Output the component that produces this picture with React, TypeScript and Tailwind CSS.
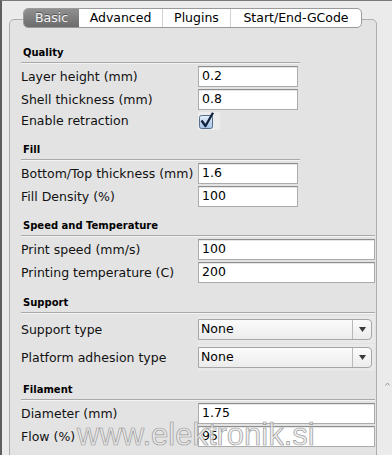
import type { ReactNode } from 'react';

const sans = "font-['DejaVu_Sans',sans-serif]";

function Header({ title, wide = false }: { title: string; wide?: boolean }) {
  return (
    <div
      className={`${wide ? 'w-[354px]' : 'w-[279px]'} h-[16px] pl-[2px] pb-[3px] border-b border-[#a9a9a9] shadow-[0_1px_0_#f3f3f3] text-[10px] leading-[12px] font-bold text-black`}
    >
      {title}
    </div>
  );
}

function Row({ label, children }: { label: string; children: ReactNode }) {
  return (
    <div className="flex items-center">
      <div className="w-[177px] text-[12.5px] leading-[16px] text-[#111] whitespace-nowrap">{label}</div>
      {children}
    </div>
  );
}

function Field({ value, wide = false }: { value: string; wide?: boolean }) {
  return (
    <div
      className={`${wide ? 'w-[177px]' : 'w-[100px]'} h-[21px] bg-white border border-[#ababab] border-t-[#8e8e8e] shadow-[inset_0_1px_0_#e6e6e6] pl-[3px] flex items-center text-[12.5px] text-black`}
    >
      {value}
    </div>
  );
}

function Select({ value }: { value: string }) {
  return (
    <div className="w-[177px] py-[3px] pr-[3px] bg-[#e9e9e9]">
      <div className="h-[21px] w-[174px] flex border border-[#a6a6a6] rounded-r-[4px] bg-linear-to-b from-[#fbfbfb] to-[#ececec]">
        <div className="flex-1 pl-[2px] flex items-center text-[12.5px] text-black">{value}</div>
        <div className="w-[19px] border-l border-[#b8b8b8] flex items-center justify-center">
          <svg width="7" height="5" viewBox="0 0 7 5">
            <path d="M0 0 H7 L3.5 5 Z" fill="#3a3a3a" />
          </svg>
        </div>
      </div>
    </div>
  );
}

function Checkbox() {
  return (
    <div className="w-[22px] h-[18px] bg-[#ececec]">
      <svg width="22" height="18" viewBox="0 0 22 18">
        <defs>
          <linearGradient id="cb" x1="0" y1="0" x2="0" y2="1">
            <stop offset="0" stopColor="#e3eefa" />
            <stop offset="1" stopColor="#a4c3e6" />
          </linearGradient>
        </defs>
        <rect x="1.5" y="3.5" width="13" height="13" rx="2" fill="url(#cb)" stroke="#566c88" />
        <path d="M3.5 8.5 L7.5 14 L15 0.8" fill="none" stroke="#10213f" strokeWidth="2.3" strokeLinejoin="round" />
      </svg>
    </div>
  );
}

const tabs = [
  { name: 'Basic', w: 'w-[55px]' },
  { name: 'Advanced', w: 'w-[83px]' },
  { name: 'Plugins', w: 'w-[68px]' },
  { name: 'Start/End-GCode', w: 'w-[131px]' },
];

export default function App() {
  return (
    <div
      className={`${sans} relative w-[392px] h-[455px] overflow-hidden bg-[#ebebeb] border-l-2 border-t border-l-[#5e5e5e] border-t-[#7a7a7a] pl-[7px] pt-[18px]`}
    >
      <div className="w-[368px] min-h-[500px] border border-[#adadad] rounded-t-[5px] bg-[#e3e3e3] pl-[11px]">
        {/* tab bar sits on the top edge */}
        <div className="-mt-[12px] ml-[2px] flex w-max h-[20px] border border-[#9a9a9a] rounded-[5px] overflow-hidden bg-white">
          {tabs.map((t, i) => (
            <div
              key={t.name}
              className={`${t.w} flex items-center justify-center text-[12.5px] ${
                i === 0
                  ? 'bg-linear-to-b from-[#909090] to-[#6c6c6c] text-[#f4f4f4] [text-shadow:0_-1px_0_#555]'
                  : 'text-black'
              } ${i > 1 ? 'border-l border-[#d2d2d2]' : ''}`}
            >
              {t.name}
            </div>
          ))}
        </div>

        <div className="mt-[19px]">
          <Header title="Quality" />
          <div className="mt-[3px] flex flex-col gap-[2px]">
            <Row label="Layer height (mm)">
              <Field value="0.2" />
            </Row>
            <Row label="Shell thickness (mm)">
              <Field value="0.8" />
            </Row>
            <Row label="Enable retraction">
              <Checkbox />
            </Row>
          </div>
        </div>

        <div className="mt-[14px]">
          <Header title="Fill" />
          <div className="mt-[3px] flex flex-col gap-[2px]">
            <Row label="Bottom/Top thickness (mm)">
              <Field value="1.6" />
            </Row>
            <Row label="Fill Density (%)">
              <Field value="100" />
            </Row>
          </div>
        </div>

        <div className="mt-[13px]">
          <Header title="Speed and Temperature" wide />
          <div className="mt-[3px] flex flex-col gap-[2px]">
            <Row label="Print speed (mm/s)">
              <Field value="100" wide />
            </Row>
            <Row label="Printing temperature (C)">
              <Field value="200" wide />
            </Row>
          </div>
        </div>

        <div className="mt-[14px]">
          <Header title="Support" wide />
          <div className="mt-[3px] flex flex-col gap-[1px]">
            <Row label="Support type">
              <Select value="None" />
            </Row>
            <Row label="Platform adhesion type">
              <Select value="None" />
            </Row>
          </div>
        </div>

        <div className="mt-[13px]">
          <Header title="Filament" wide />
          <div className="mt-[3px] flex flex-col gap-[2px]">
            <Row label="Diameter (mm)">
              <Field value="1.75" wide />
            </Row>
            <Row label="Flow (%)">
              <Field value="95" wide />
            </Row>
          </div>
        </div>
      </div>

      {/* tiny grip mark outside the panel */}
      <svg className="absolute left-[383px] top-[381px]" width="5" height="4" viewBox="0 0 5 4">
        <path d="M0.5 3.5 L2.5 1 L4.5 3.5" fill="none" stroke="#9a9a9a" strokeWidth="1" />
      </svg>

      {/* watermark */}
      <div className="absolute left-[75px] top-[418px] font-['Liberation_Sans',sans-serif] text-[31px] leading-[31px] text-[#ebebeb]/80 [-webkit-text-stroke:0.7px_#9a9a9a] whitespace-nowrap pointer-events-none">
        www.elektronik.si
      </div>
    </div>
  );
}
